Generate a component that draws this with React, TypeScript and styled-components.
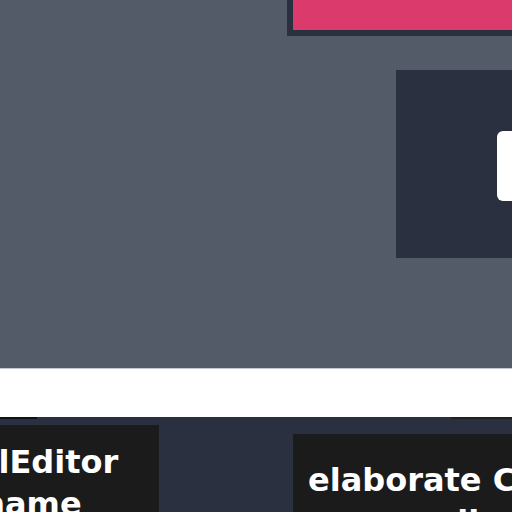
import React from "react";
import styled, { createGlobalStyle } from "styled-components";

const Global = createGlobalStyle`
  html, body { margin: 0; padding: 0; background: #545b68; }
  body { overflow: hidden; width: 512px; height: 512px; }
  * { box-sizing: border-box; }
`;

const Page = styled.div`
  width: 512px;
  height: 512px;
  overflow: hidden;
  display: flex;
  flex-direction: column;
  font-family: "DejaVu Sans", "Noto Sans", sans-serif;
`;

const Stage = styled.section`
  height: 368px;
  flex-shrink: 0;
  background: #545b68;
  display: flex;
  flex-direction: column;
`;

const Banner = styled.div`
  margin-left: 287px;
  width: 260px;
  height: 36px;
  flex-shrink: 0;
  background: #db3a6c;
  border-left: 6px solid #2b3040;
  border-bottom: 6px solid #2b3040;
`;

const Panel = styled.div`
  margin-top: 34px;
  margin-left: 396px;
  width: 200px;
  height: 188px;
  flex-shrink: 0;
  background: #2b3040;
  padding: 61px 0 0 101px;
`;

const Field = styled.div`
  width: 80px;
  height: 70px;
  background: #ffffff;
  border-radius: 6px;
`;

const Band = styled.div`
  height: 49px;
  flex-shrink: 0;
  background: #ffffff;
  border-top: 1px solid #c4c8d2;
`;

const Lower = styled.section`
  flex: 1;
  background: #2b3040;
  display: flex;
  flex-direction: column;
`;

const Shadows = styled.div`
  height: 2px;
  display: flex;
  justify-content: space-between;
`;

const Shade = styled.div<{ $w: number; $c: string }>`
  width: ${(p) => p.$w}px;
  height: 2px;
  background: ${(p) => p.$c};
`;

const Cards = styled.div`
  display: flex;
  align-items: flex-start;
`;

const Card = styled.div<{ $w: number; $top: number; $left: number; $pad: number }>`
  flex-shrink: 0;
  width: ${(p) => p.$w}px;
  height: 140px;
  margin-top: ${(p) => p.$top}px;
  margin-left: ${(p) => p.$left}px;
  padding-top: ${(p) => p.$pad}px;
  background: #1b1b1b;
  overflow: hidden;
`;

const Title = styled.div<{ $indent: number }>`
  margin-left: ${(p) => p.$indent}px;
  color: #ffffff;
  font-weight: 700;
  font-size: 32px;
  line-height: 42px;
  white-space: nowrap;
`;

export default function App() {
  return (
    <>
      <Global />
      <Page>
        <Stage>
          <Banner />
          <Panel>
            <Field />
          </Panel>
        </Stage>
        <Band />
        <Lower>
          <Shadows>
            <Shade $w={37} $c="#111214" />
            <Shade $w={61} $c="#1f211c" />
          </Shadows>
          <Cards>
            <Card $w={159} $top={6} $left={0} $pad={16}>
              <Title $indent={-100}>
                ModelEditor
                <br />
                Edit name
              </Title>
            </Card>
            <Card $w={260} $top={15} $left={134} $pad={25}>
              <Title $indent={15}>
                elaborate Components
                <br />
                across all
              </Title>
            </Card>
          </Cards>
        </Lower>
      </Page>
    </>
  );
}
